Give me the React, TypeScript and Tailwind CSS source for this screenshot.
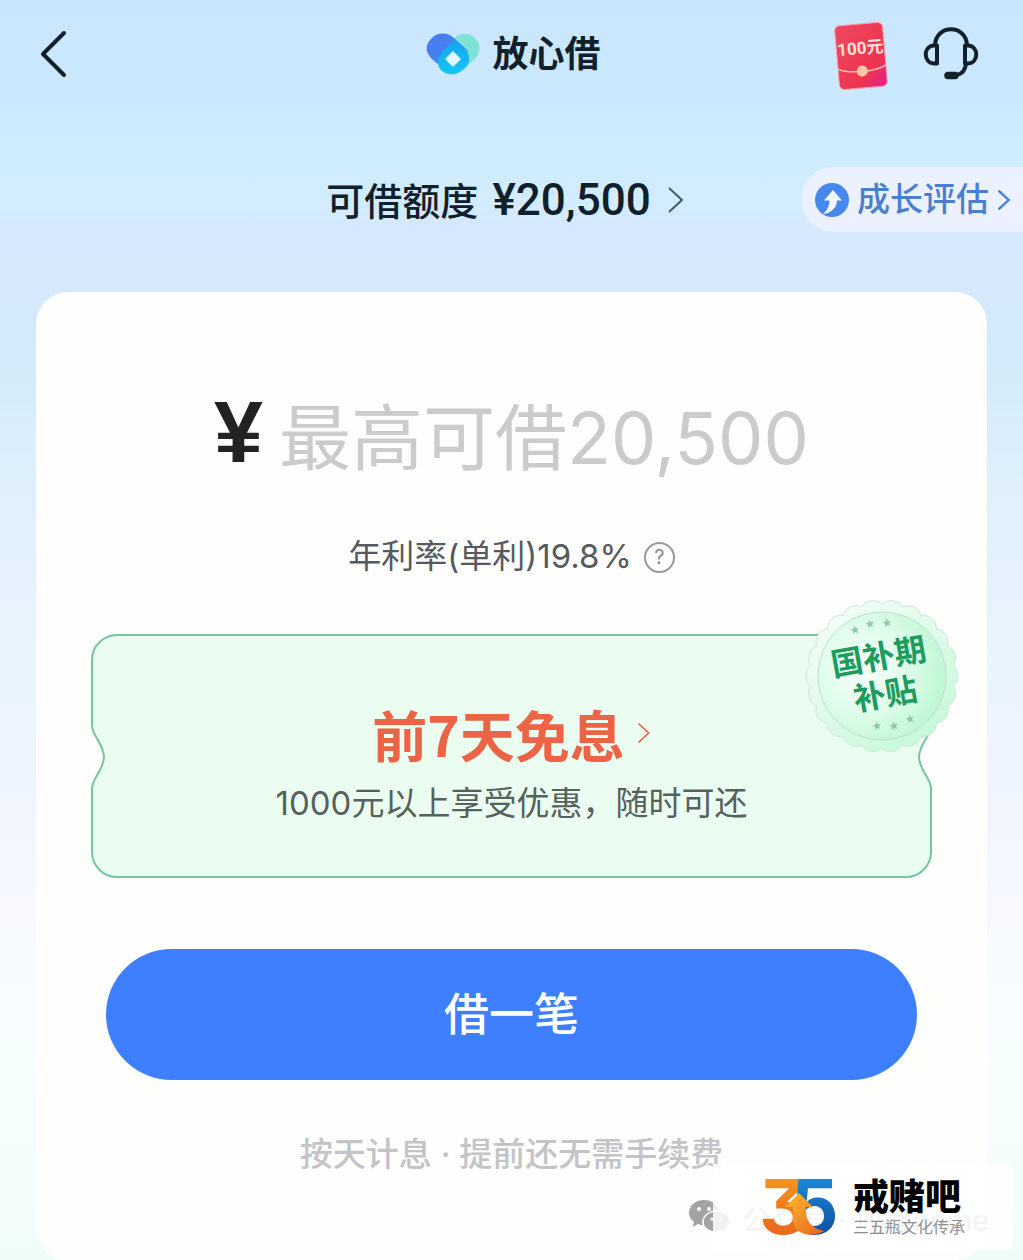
import type { ReactNode } from 'react';

const CJK = "font-['Inter','Noto_Sans_CJK_SC',sans-serif]";

function ChevronRight({ className }: { className: string }) {
  return (
    <svg viewBox="0 0 18 28" fill="none" stroke="currentColor" className={className} aria-hidden="true">
      <path d="M2 2 L15 14 L2 26" />
    </svg>
  );
}

function BrandMark() {
  return (
    <svg viewBox="0 0 54 42" className="h-[42px] w-[54px]" aria-hidden="true">
      <defs>
        <linearGradient id="bm-left" x1="0" y1="0" x2="1" y2="1">
          <stop offset="0" stopColor="#4a7cf0" />
          <stop offset="1" stopColor="#3b86f0" />
        </linearGradient>
        <linearGradient id="bm-drop" x1="0" y1="0" x2="0" y2="1">
          <stop offset="0" stopColor="#12a5ee" />
          <stop offset="1" stopColor="#17c6f4" />
        </linearGradient>
      </defs>
      <path d="M27 7 C32 0 43 -1 49 5 C56 12 54 21 49 26 L40 34 L22 16 Z" fill="#7fe3d6" />
      <path d="M5 6 C11 -1 21 -1 28 5 L42 18 L20 38 L6 26 C-1 19 -1 12 5 6 Z" fill="url(#bm-left)" />
      <path d="M29 7 L38 15 C46 22 44 31 38 36 C31 43 21 43 15 37 C10 31 12 24 17 18 Z" fill="url(#bm-drop)" />
      <path d="M27 18 L35 26 L27 34 L19 26 Z" fill="#dff8ff" />
    </svg>
  );
}

function Envelope() {
  return (
    <svg viewBox="0 0 56 70" className="mt-1 h-[70px] w-14" aria-hidden="true">
      <defs>
        <linearGradient id="env" x1="0" y1="0" x2="1" y2="1">
          <stop offset="0" stopColor="#ee4a62" />
          <stop offset="0.700" stopColor="#ee3450" />
          <stop offset="1" stopColor="#e0208a" />
        </linearGradient>
      </defs>
      <g transform="rotate(-5 28 35)">
        <rect x="4" y="3" width="48" height="64" rx="5" fill="url(#env)" stroke="#ff9cac" strokeWidth="1" />
        <path d="M4 46 C14 52 42 52 52 46" fill="none" stroke="#ffc0a8" strokeWidth="1.500" />
        <circle cx="28" cy="50" r="5.500" fill="#fcc7a4" />
        <text x="28" y="33" textAnchor="middle" fontSize="17" fontWeight="700" fill="#ffe3dc" className="font-['Roboto','Noto_Sans_CJK_SC',sans-serif]">
          100元
        </text>
      </g>
    </svg>
  );
}

function Headset() {
  return (
    <svg viewBox="0 0 56 54" fill="none" stroke="#12202b" strokeWidth="4" strokeLinejoin="round" className="h-[54px] w-14" aria-hidden="true">
      <path d="M12 18 C13 -3 43 -3 44 18" />
      <path d="M14 18.500 V36.500 H11 C0 36 0 19 11 18.500 Z" />
      <path d="M42 18.500 V36.500 H45 C56 36 56 19 45 18.500 Z" />
      <path d="M43 37 C42 44 39 47 34 48" />
      <path d="M25 48.500 H32" strokeWidth="7.500" strokeLinecap="round" />
    </svg>
  );
}

function GrowthIcon() {
  return (
    <svg viewBox="0 0 34 34" className="h-[34px] w-[34px]" aria-hidden="true">
      <circle cx="17" cy="17" r="17" fill="#4688ec" />
      <path d="M18 7 L27 17.500 H22 C22 24 17 30 8 31 C12.500 27 14.500 22.500 14.500 17.500 H9 Z" fill="#f2f7ff" />
    </svg>
  );
}

function scallop(cx: number, cy: number, r: number, depth: number, waves: number) {
  const points: string[] = [];
  const steps = waves * 12;
  for (let i = 0; i < steps; i++) {
    const a = (i / steps) * Math.PI * 2;
    const rr = r + depth * Math.pow(Math.abs(Math.cos((a * waves) / 2)), 0.8);
    points.push(`${(cx + rr * Math.cos(a)).toFixed(2)} ${(cy + rr * Math.sin(a)).toFixed(2)}`);
  }
  return `M${points.join(' L')} Z`;
}

function star(cx: number, cy: number, r: number) {
  const pts: string[] = [];
  for (let i = 0; i < 10; i++) {
    const a = -Math.PI / 2 - 0.2 + (i * Math.PI) / 5;
    const rr = i % 2 ? r * 0.45 : r;
    pts.push(`${(cx + rr * Math.cos(a)).toFixed(2)},${(cy + rr * Math.sin(a)).toFixed(2)}`);
  }
  return pts.join(' ');
}

const STARS = [
  [50, 31],
  [65, 25],
  [82, 24],
  [72, 127],
  [89, 127],
  [105, 120],
];

function Seal() {
  return (
    <div className="absolute -top-9 -right-7 size-[154px]">
      <svg viewBox="0 0 154 154" className="absolute inset-0 size-full" aria-hidden="true">
        <defs>
          <linearGradient id="seal" x1="0.100" y1="0" x2="0.900" y2="1">
            <stop offset="0" stopColor="#f7fefa" />
            <stop offset="0.500" stopColor="#ddfce8" />
            <stop offset="1" stopColor="#c2f8d6" />
          </linearGradient>
          <radialGradient id="seal-core" cx="0.350" cy="0.450" r="0.650">
            <stop offset="0" stopColor="#f6fffa" />
            <stop offset="0.500" stopColor="#e2fdec" />
            <stop offset="1" stopColor="#bdf7d2" />
          </radialGradient>
        </defs>
        <path d={scallop(77, 77, 72, 4, 22)} fill="url(#seal)" stroke="#cbe6d7" strokeWidth="1" />
        <circle cx="77" cy="77" r="64" fill="url(#seal-core)" stroke="#bfdfcd" strokeWidth="1" />
        {STARS.map(([x, y]) => (
          <polygon key={`${x}-${y}`} points={star(x, y, 4.5)} fill="#8cc9a9" />
        ))}
      </svg>
      <div className="absolute inset-0 flex -rotate-10 flex-col items-center justify-center text-[32px] leading-[38px] font-bold text-[#1c9d5f]">
        <span>国补期</span>
        <span>补贴</span>
      </div>
    </div>
  );
}

function Ticket({ children }: { children: ReactNode }) {
  return (
    <section className="relative flex flex-col items-center pt-[62px] pb-[50px]">
      <svg viewBox="0 0 840 242" preserveAspectRatio="none" className="absolute inset-0 size-full overflow-visible" aria-hidden="true">
        <path
          d="M25 0 H815 A25 25 0 0 1 840 25 V90 C840 97 836 101 832 109 C829 115 828 118 828 122 C828 126 829 129 832 135 C836 143 840 147 840 154 V217 A25 25 0 0 1 815 242 H25 A25 25 0 0 1 0 217 V154 C0 147 4 143 8 135 C11 129 12 126 12 122 C12 118 11 115 8 109 C4 101 0 97 0 90 V25 A25 25 0 0 1 25 0 Z"
          fill="#ebfcf1"
          stroke="#76c5a0"
          strokeWidth="2"
          vectorEffect="non-scaling-stroke"
        />
      </svg>
      {children}
      <Seal />
    </section>
  );
}

function Logo35() {
  return (
    <svg viewBox="0 0 76 60" className="h-[60px] w-[76px] overflow-visible" aria-hidden="true">
      <defs>
        <linearGradient id="three" x1="0" y1="0" x2="0" y2="1">
          <stop offset="0" stopColor="#f7a11b" />
          <stop offset="1" stopColor="#e85a1c" />
        </linearGradient>
        <linearGradient id="five" x1="0" y1="0" x2="0" y2="1">
          <stop offset="0" stopColor="#1e9be6" />
          <stop offset="1" stopColor="#0a3f94" />
        </linearGradient>
        <linearGradient id="arrow" x1="0" y1="0" x2="1" y2="1">
          <stop offset="0" stopColor="#fcc12e" />
          <stop offset="1" stopColor="#ea5f1e" />
        </linearGradient>
      </defs>
      <g fontSize="76" fontWeight="700" className="font-['Inter',sans-serif] [font-feature-settings:'cv09']">
        <text x="-2" y="57" fill="url(#three)">3</text>
        <text x="29" y="57" fill="url(#five)">5</text>
      </g>
      <path d="M38 16 L52 30 H45 C44 44 50 51 63 54 C50 62 32 57 32 42 V30 H24 Z" fill="url(#arrow)" />
    </svg>
  );
}

function WeChat() {
  return (
    <svg viewBox="0 0 46 36" className="h-9 w-[46px]" aria-hidden="true">
      <path d="M16 1 C7 1 1 7 1 14 C1 18 3 21 6 23 L4.500 28 L10 25 C12 26 14 26 16 26 C25 26 31 21 31 14 C31 7 25 1 16 1 Z" fill="#a3a3a3" />
      <circle cx="11" cy="10" r="2" fill="#fff" />
      <circle cx="21" cy="10" r="2" fill="#fff" />
      <path d="M29 12 C21 12 15 17 15 23 C15 29 21 33 28 33 C30 33 31 33 33 32 L38 35 L37 30 C40 28 42 26 42 23 C42 17 36 12 29 12 Z" fill="#a3a3a3" stroke="#fff" strokeWidth="1.500" />
      <circle cx="24" cy="20" r="1.600" fill="#fff" />
      <circle cx="33" cy="20" r="1.600" fill="#fff" />
    </svg>
  );
}

export default function App() {
  return (
    <div
      className={`${CJK} relative flex min-h-screen flex-col overflow-hidden bg-[linear-gradient(180deg,#c9e6fd_0px,#cbe9fe_100px,#d2edff_200px,#d7e7fd_240px,#d6e8fc_290px,#d2eafa_350px,#dfeffc_480px,#e9f4fd_650px,#f0f5fe_800px,#f7f9fe_920px,#f7fefe_1060px,#f0fcfa_1260px)] text-[#12202b]`}
    >
      <header className="grid h-[108px] grid-cols-[1fr_auto_1fr] items-center px-10">
        <button type="button" aria-label="返回" className="flex size-12 items-center">
          <svg viewBox="0 0 28 48" fill="none" stroke="currentColor" strokeWidth="4" strokeLinecap="round" strokeLinejoin="round" className="h-12 w-7">
            <path d="M24 3 L3 24 L24 45" />
          </svg>
        </button>
        <h1 className="flex items-center gap-3 pl-1 text-4xl font-bold">
          <BrandMark />
          放心借
        </h1>
        <div className="flex items-center justify-end gap-[34px] pr-1">
          <button type="button" aria-label="100元红包">
            <Envelope />
          </button>
          <button type="button" aria-label="客服">
            <Headset />
          </button>
        </div>
      </header>

      <div className="relative mt-[59px] flex h-[65px] items-center justify-center">
        <button type="button" className="mr-3 flex items-center gap-4 text-[38px] leading-none font-medium">
          <span>
            可借额度 <span className="ml-1 font-['Roboto',sans-serif] text-[44px]">¥20,500</span>
          </span>
          <ChevronRight className="h-7 w-[18px] stroke-2 text-[#46586a]" />
        </button>
        <button
          type="button"
          className="absolute inset-y-0 right-0 flex items-center gap-2 rounded-l-full bg-[#ebf1fe] pr-3 pl-3.5 text-[33px] font-medium text-[#4a7fd0]"
        >
          <GrowthIcon />
          成长评估
          <ChevronRight className="h-6 w-3.5 stroke-3" />
        </button>
      </div>

      <main className="mx-9 mt-[60px] flex flex-1 flex-col rounded-[32px] bg-[#fefefd] px-14 pt-24 pb-14">
        <label className="flex h-24 items-center justify-center gap-4">
          <span className="pb-2 font-['Liberation_Sans',sans-serif] text-[88px] leading-none font-bold text-[#222]">¥</span>
          <input
            aria-label="借款金额"
            inputMode="numeric"
            placeholder="最高可借20,500"
            className="field-sizing-content h-24 bg-transparent pb-1 text-[72px] font-normal outline-none placeholder:text-[#cbcbcb]"
          />
        </label>

        <div className="mt-[53px] flex h-10 items-center justify-center gap-3 text-[33px] text-[#555a5f]">
          年利率(单利)19.8%
          <button
            type="button"
            aria-label="利率说明"
            className="flex size-[31px] items-center justify-center rounded-full border-2 border-[#999] text-xl leading-none text-[#888]"
          >
            ?
          </button>
        </div>

        <div className="mt-[58px]">
          <Ticket>
            <button type="button" className="relative flex items-center gap-3 text-[55px] leading-[72px] font-bold text-[#ec6345]">
              <span className="font-['Noto_Sans_CJK_SC',sans-serif]">前7天免息</span>
              <ChevronRight className="h-6 w-3.5 stroke-2" />
            </button>
            <p className="relative mt-2.5 text-[33px] leading-12 text-[#55625c]">1000元以上享受优惠，随时可还</p>
          </Ticket>
        </div>

        <button type="button" className="mx-3.5 mt-18 h-[131px] rounded-full bg-[#3d7fff] text-[45px] font-medium text-white">
          借一笔
        </button>

        <p className="mt-[54px] text-center text-[33px] leading-10 font-medium text-[#c4c4c8]">按天计息 · 提前还无需手续费</p>
      </main>

      <aside className="absolute right-2.5 bottom-2.5 h-[86px] w-[325px]">
        <div className="flex h-full items-center pt-5">
          <WeChat />
        </div>
        <div className="absolute inset-y-0 right-0 flex w-[300px] items-center bg-white/85 pl-12">
          <span className="absolute right-6 bottom-2 text-[29px] whitespace-nowrap text-[#f3f3f3]">公众号 · 戒赌home</span>
          <div className="relative">
            <Logo35 />
          </div>
          <div className="relative ml-4 whitespace-nowrap">
            <div className="text-4xl leading-10 font-black text-black">戒赌吧</div>
            <div className="text-base leading-5 text-[#909090]">三五瓶文化传承</div>
          </div>
        </div>
      </aside>
    </div>
  );
}
